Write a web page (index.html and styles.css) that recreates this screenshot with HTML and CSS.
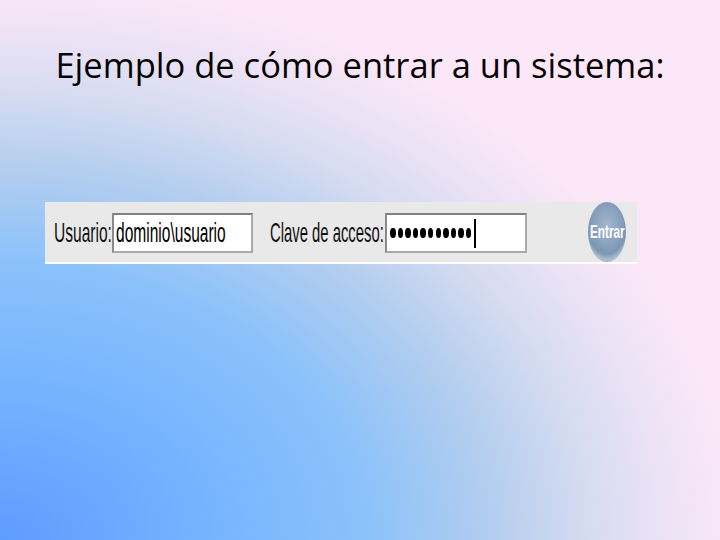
FILE: index.html
```html
<!DOCTYPE html>
<html lang="es">
<head>
    <meta charset="UTF-8">
    <meta name="viewport" content="width=device-width, initial-scale=1.0">
    <title>Ejemplo de cómo entrar a un sistema</title>
    <link rel="stylesheet" href="styles.css">
</head>
<body>
    <div class="slide">
        <h1>Ejemplo de cómo entrar a un sistema:</h1>

        <div class="login-bar">
            <label class="field-label user-label" for="user"><span>Usuario:</span></label>
            <div class="text-box user-box" id="user"><span>dominio\usuario</span></div>

            <label class="field-label pass-label" for="pass"><span>Clave de acceso:</span></label>
            <div class="text-box pass-box" id="pass">
                <div class="dots">
                    <i></i><i></i><i></i><i></i><i></i><i></i><i></i><i></i><i></i><i></i><i></i>
                </div>
                <div class="caret"></div>
            </div>

            <div class="enter-btn"><span>Entrar</span></div>
        </div>
    </div>
</body>
</html>
```

FILE: styles.css
```css
* {
    margin: 0;
    padding: 0;
    box-sizing: border-box;
}

body {
    width: 720px;
    height: 540px;
    overflow: hidden;
    background:
        radial-gradient(ellipse 740px 560px at 0% 100%,
            #5e9cff 0%,
            #78b5ff 30%,
            #8cc2fa 50%,
            #b2cdef 66%,
            #d6dcf1 80%,
            #ece2f5 90%,
            #fbe7f8 100%);
    background-color: #fbe7f8;
}

.slide {
    padding-top: 45px;
}

h1 {
    font-family: 'Open Sans', sans-serif;
    font-weight: 400;
    font-size: 34.5px;
    line-height: 40px;
    color: #050505;
    text-align: center;
}

.login-bar {
    margin: 117px 0 0 45px;
    width: 592px;
    height: 62px;
    background: #e9e9e9;
    border-bottom: 2px solid #fff;
    display: flex;
    align-items: flex-start;
    padding: 11px 0 0 9px;
    font-family: 'Liberation Sans', Arial, sans-serif;
}

.field-label {
    flex-shrink: 0;
    white-space: nowrap;
    height: 40px;
    line-height: 40px;
    font-size: 28px;
    color: #111;
}

.field-label span,
.text-box span {
    display: inline-block;
    transform: scaleX(0.555);
    transform-origin: left center;
}

.user-label {
    width: 58px;
}

.pass-label {
    width: 115px;
    margin-left: 17px;
}

.pass-label span {
    transform: scaleX(0.53);
}

.text-box {
    flex-shrink: 0;
    width: 141px;
    height: 40px;
    background: #fff;
    border: 2px solid #a9a9a9;
    border-top-color: #808080;
    border-left-color: #8a8a8a;
    white-space: nowrap;
    overflow: hidden;
    font-size: 28px;
    line-height: 36px;
    color: #000;
    padding-left: 2px;
}

.pass-box {
    width: 142px;
    display: flex;
    align-items: center;
    padding-left: 3px;
}

.dots {
    display: flex;
    gap: 2.1px;
}

.dots i {
    display: block;
    width: 5.5px;
    height: 10px;
    border-radius: 50%;
    background: #000;
}

.caret {
    width: 2px;
    height: 29px;
    background: #000;
    margin-left: 3px;
}

.enter-btn {
    flex-shrink: 0;
    margin: -11px 0 0 61px;
    width: 38px;
    height: 60px;
    border-radius: 50%;
    background: radial-gradient(ellipse 60% 55% at 50% 40%, #a3b7cc 0%, #8aa3bf 55%, #7c96b3 85%, #a9bbcd 100%);
    display: flex;
    align-items: center;
    padding-left: 2px;
}

.enter-btn span {
    display: inline-block;
    font-weight: 700;
    font-size: 19px;
    color: #fff;
    white-space: nowrap;
    transform: scaleX(0.62);
    transform-origin: left center;
}
```
